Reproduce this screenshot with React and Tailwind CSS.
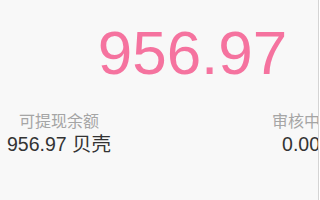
export default function App() {
  return (
    <div
      className="flex h-[200px] w-[320px] bg-[#f8f8f8]"
      style={{ fontFamily: '"Liberation Sans", "Noto Sans CJK SC", sans-serif' }}
    >
      <div className="w-[318px] shrink-0 overflow-hidden">
        <div className="flex w-[385px] flex-col">
          {/* 总额 */}
          <div className="pt-[22px] text-center text-[62px] leading-none text-[#f5739f]">956.97</div>

          {/* 余额 / 审核中 */}
          <div className="mt-[30px] flex justify-between pr-[65px]">
            <div className="w-[118px] text-center">
              <div className="text-[16px] leading-4 text-[#a5a5a5]">可提现余额</div>
              <div className="mt-[5px] text-[19.5px] leading-[19px] text-[#333333]">956.97 贝壳</div>
            </div>
            <div className="text-right">
              <div className="text-[16px] leading-4 text-[#a5a5a5]">审核中</div>
              <div className="mt-[5px] text-[19.5px] leading-[19px] text-[#333333]">0.00</div>
            </div>
          </div>
        </div>
      </div>
      <div className="w-px shrink-0 bg-[#d4d4d4]" />
      <div className="w-px shrink-0 bg-white" />
    </div>
  );
}
